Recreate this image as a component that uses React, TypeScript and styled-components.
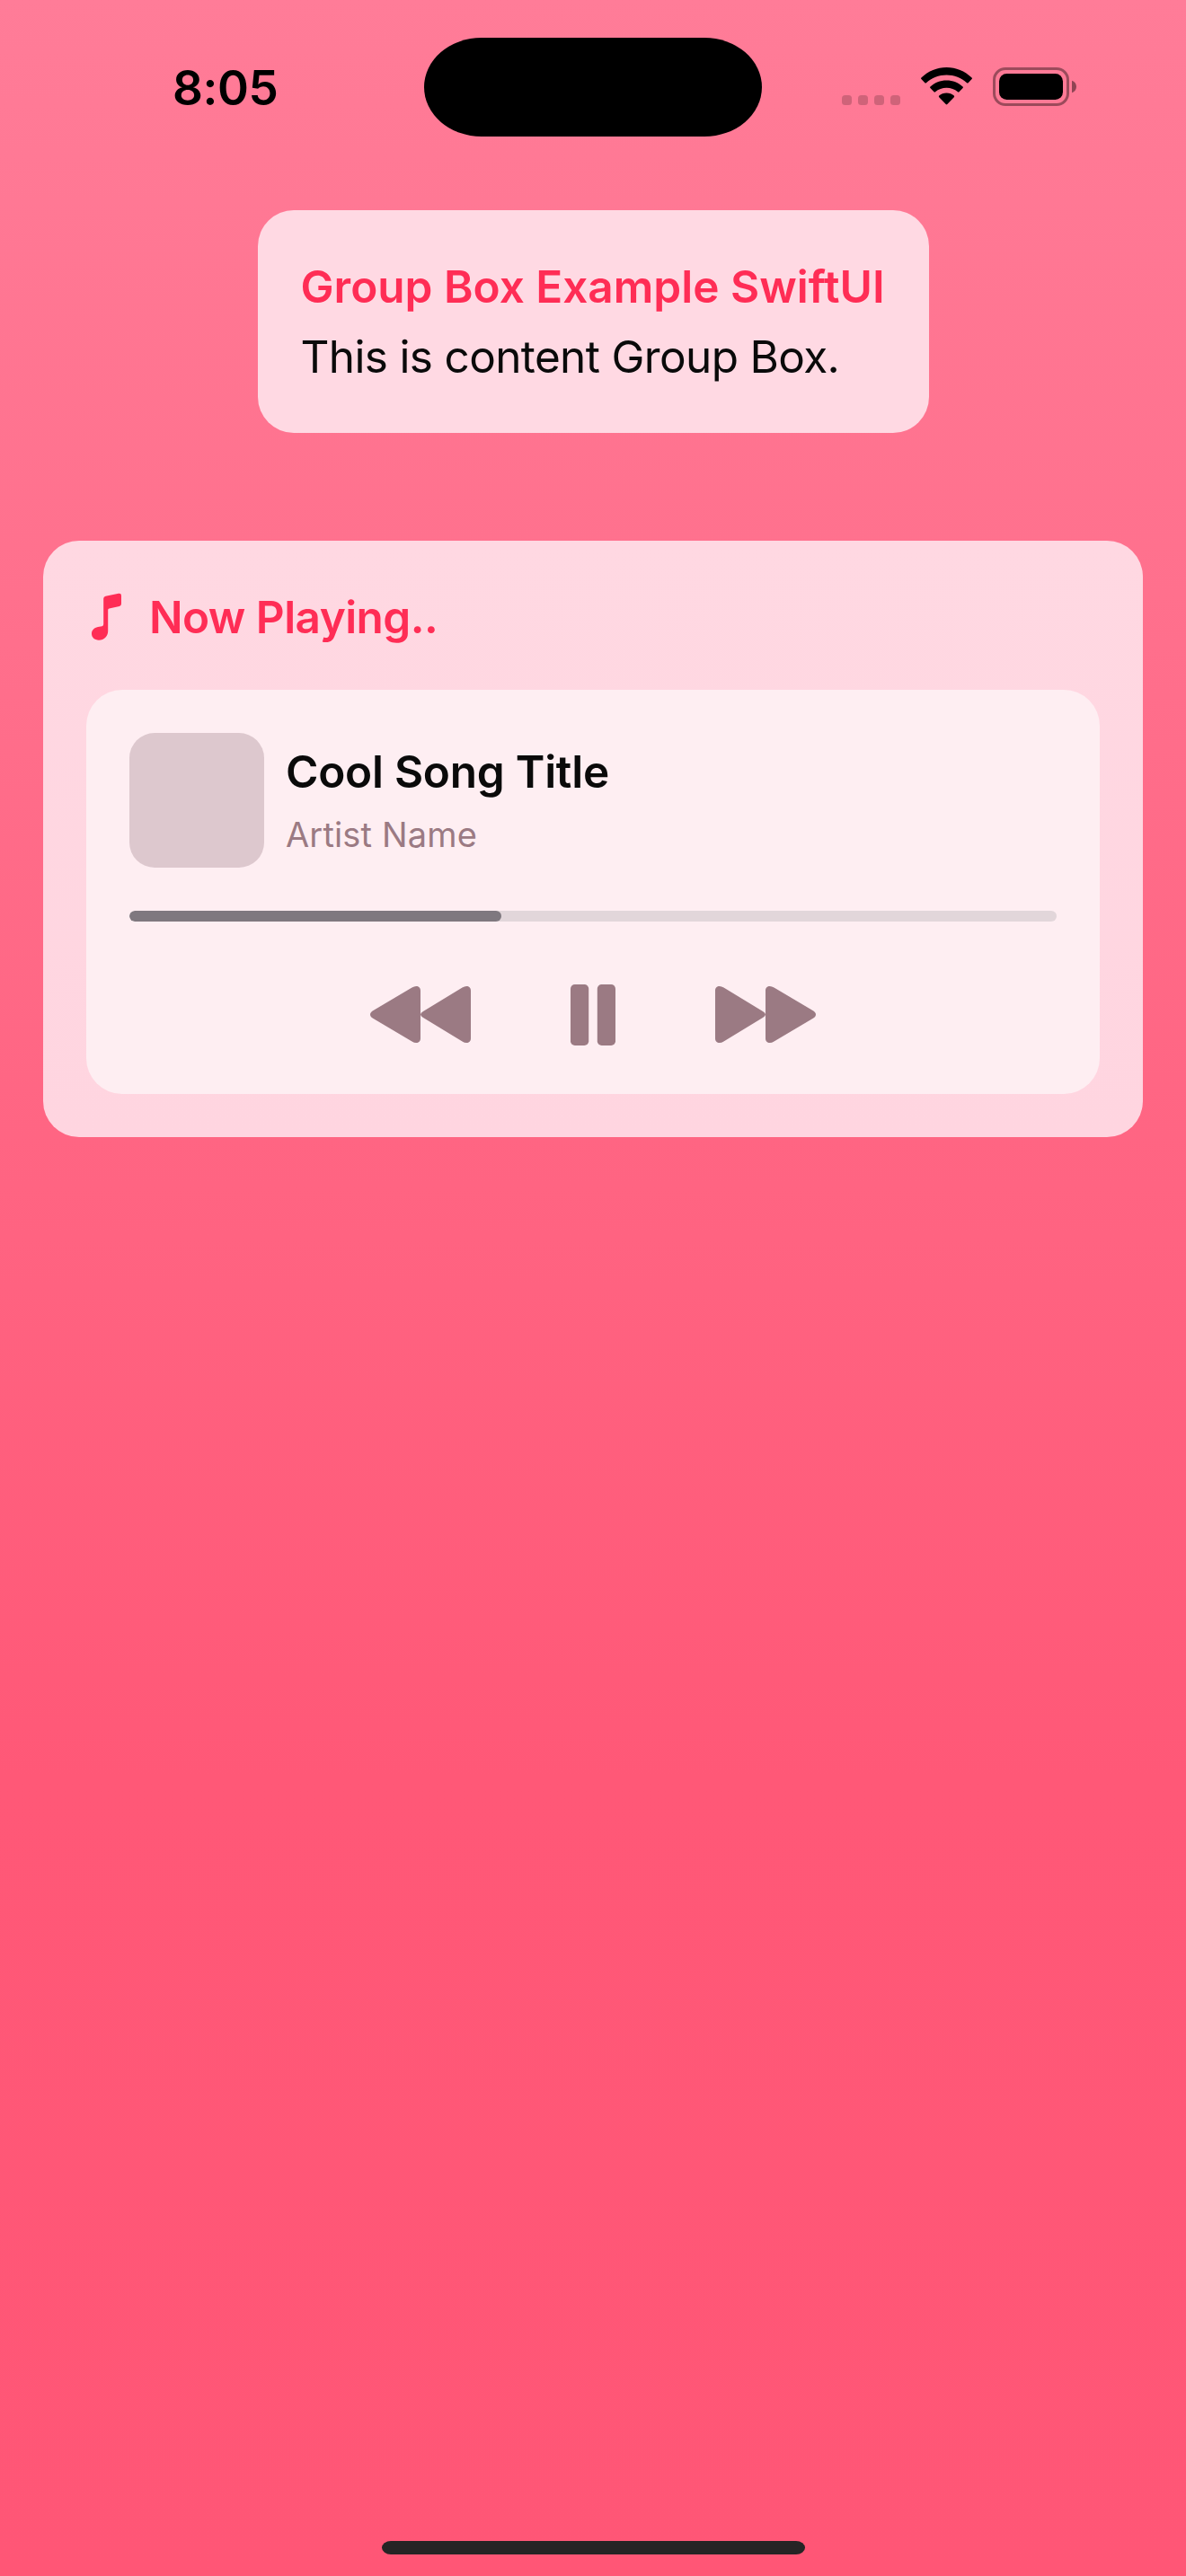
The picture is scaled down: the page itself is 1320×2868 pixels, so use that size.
import React from "react";
import styled, { createGlobalStyle } from "styled-components";

const GlobalStyle = createGlobalStyle`
  * { box-sizing: border-box; }
  html, body { margin: 0; padding: 0; }
  body { font-family: Inter, "Liberation Sans", sans-serif; }
`;

const Screen = styled.main`
  width: 1320px;
  height: 2868px;
  display: flex;
  flex-direction: column;
  align-items: center;
  overflow: hidden;
  background: linear-gradient(180deg, #ff7c98 0%, #ff7a96 4%, #ff5877 69%, #ff5676 100%);
`;

const StatusBar = styled.header`
  width: 100%;
  height: 234px;
  padding: 42px 122px 0 192px;
  display: flex;
  align-items: flex-start;
`;

const Clock = styled.time`
  width: 280px;
  padding-top: 24px;
  font-size: 53px;
  font-weight: 600;
  line-height: 64px;
  letter-spacing: -0.4px;
  color: #000;
`;

const Island = styled.div`
  width: 376px;
  height: 110px;
  border-radius: 64px / 55px;
  background: #000;
`;

const Indicators = styled.div`
  margin-left: auto;
  padding-top: 33px;
  display: flex;
  gap: 23px;
`;

const SignalDots = styled.div`
  display: flex;
  gap: 7px;
  padding-top: 31px;
`;

const Dot = styled.i`
  width: 11px;
  height: 11px;
  border-radius: 3.5px;
  background: rgba(0, 0, 0, 0.19);
`;

const GroupBox = styled.section<{ $width: number; $height: number; $fill: string }>`
  width: ${(p) => p.$width}px;
  height: ${(p) => p.$height}px;
  padding: 48px;
  border-radius: 40px;
  background: ${(p) => p.$fill};
  flex: none;
`;

const Stack = styled.div`
  display: flex;
  flex-direction: column;
  align-items: center;
  gap: 120px;
`;

const Label = styled.h2<{ $spacing?: number }>`
  display: flex;
  align-items: center;
  margin: 0;
  height: 74px;
  font-size: 49.5px;
  font-weight: 600;
  line-height: 74px;
  letter-spacing: ${(p) => p.$spacing ?? 0}px;
  color: #ff2d55;
  white-space: nowrap;
`;

const LabelIcon = styled.svg`
  width: 34px;
  height: 54px;
  margin: 0 30px 0 6px;
`;

const Body = styled.p`
  margin: 0;
  padding-top: 8px;
  font-size: 49.5px;
  line-height: 66px;
  letter-spacing: -0.65px;
  color: #0a0a0a;
  white-space: nowrap;
`;

const PlayerSlot = styled.div`
  padding-top: 44px;
`;

const Track = styled.div`
  display: flex;
  align-items: center;
  gap: 24px;
`;

const Artwork = styled.div`
  width: 150px;
  height: 150px;
  border-radius: 28px;
  background: #ddc8ce;
`;

const TrackText = styled.div`
  display: flex;
  flex-direction: column;
  gap: 6px;
  padding-top: 3px;
`;

const SongTitle = styled.h3`
  margin: 0;
  font-size: 49.5px;
  font-weight: 600;
  line-height: 66px;
  letter-spacing: -0.25px;
  color: #0a0a0a;
`;

const Artist = styled.p`
  margin: 0;
  padding-top: 1px;
  font-size: 38px;
  line-height: 60px;
  letter-spacing: 0.15px;
  color: #9b7a83;
`;

const Progress = styled.div`
  height: 12px;
  margin-top: 48px;
  border-radius: 6px;
  overflow: hidden;
  background: #e2d6da;
`;

const ProgressFill = styled.div`
  height: 100%;
  border-radius: 6px;
  background: #7f787f;
`;

const Controls = styled.div`
  display: flex;
  justify-content: center;
  align-items: center;
  gap: 111px;
  height: 69px;
  margin-top: 69px;
  color: #9b7a83;
`;

const HomeIndicator = styled.div`
  width: 471px;
  height: 15px;
  margin: auto 0 24px 1px;
  border-radius: 10px / 7.5px;
  background: #262425;
`;

const WifiIcon = () => (
  <svg width="57" height="42" viewBox="0 0 57 42" fill="#000">
    <path d="M28.5 0C39 0 48.800 4 56.600 11.600Q57.300 12.400 56.600 13.100L52.600 17.200Q51.800 17.900 51.100 17.200C45 11.500 37 8.500 28.500 8.500S12 11.500 5.900 17.200Q5.200 17.900 4.400 17.200L.4 13.100Q-.3 12.400 .4 11.600C8.200 4 18 0 28.500 0Z" />
    <path d="M28.500 14.500C35.500 14.500 41.700 17 46.600 21.600Q47.400 22.400 46.600 23.100L42.500 27.300Q41.700 28 41 27.300C37.600 24.300 33.200 22.700 28.500 22.700S19.400 24.300 16 27.300Q15.300 28 14.500 27.300L10.400 23.100Q9.600 22.400 10.400 21.600C15.300 17 21.500 14.500 28.500 14.500Z" />
    <path d="M28.500 28.600C31.800 28.600 34.500 29.700 36.800 31.600Q37.600 32.400 36.800 33.200L29.300 41.100Q28.500 41.900 27.700 41.100L20.200 33.200Q19.400 32.400 20.200 31.600C22.500 29.700 25.200 28.600 28.500 28.600Z" />
  </svg>
);

const BatteryIcon = () => (
  <svg width="93" height="43" viewBox="0 0 93 43">
    <rect x="1.500" y="1.500" width="82" height="40" rx="12.500" fill="none" stroke="#000" strokeOpacity=".39" strokeWidth="3" />
    <rect x="7" y="7" width="71" height="29" rx="8.500" fill="#000" />
    <path d="M88 14.700C91 15.700 93 18.300 93 21.500S91 27.300 88 28.300Z" fill="#000" fillOpacity=".44" />
  </svg>
);

const NoteIcon = () => (
  <LabelIcon viewBox="0 0 34 54" fill="#ff2d55">
    <path d="M13.200 6.500Q13.200 4.200 15.500 3.700L30 .8Q33 .3 33 3V12.300Q33 14.500 30.900 15L19.500 17.400Q18.200 17.700 18.200 19V42.500C18.200 48.500 14 52.700 8 52.700C3.300 52.700 0 49.800 0 45.600C0 41.700 2.700 39 7 38.100L11.500 37.200Q13.200 36.800 13.200 35Z" />
  </LabelIcon>
);

const skipPath =
  "M0 5C0 1.500 2 0 4.800 0Q7 0 9.500 1.500L53 28Q56 29.800 56 31.500V5C56 1.500 58 0 60.800 0Q63 0 65.500 1.500L108.500 27Q112 29 112 31.500T108.500 36L65.500 61.500Q63 63 60.800 63C58 63 56 61.500 56 58V31.500Q56 33.200 53 35L9.500 61.500Q7 63 4.800 63C2 63 0 61.500 0 58Z";

const RewindIcon = () => (
  <svg width="112" height="63" viewBox="0 0 112 63" fill="currentColor">
    <path transform="translate(112 0) scale(-1 1)" d={skipPath} />
  </svg>
);

const ForwardIcon = () => (
  <svg width="112" height="63" viewBox="0 0 112 63" fill="currentColor">
    <path d={skipPath} />
  </svg>
);

const PauseIcon = () => (
  <svg width="50" height="68" viewBox="0 0 50 68" fill="currentColor">
    <rect x="0" width="20.200" height="68" rx="4.800" />
    <rect x="29.800" width="20.200" height="68" rx="4.800" />
  </svg>
);

export default function App() {
  const progress = 414 / 1032;
  return (
    <>
      <GlobalStyle />
      <Screen>
        <StatusBar>
          <Clock>8:05</Clock>
          <Island />
          <Indicators>
            <SignalDots>
              <Dot />
              <Dot />
              <Dot />
              <Dot />
            </SignalDots>
            <WifiIcon />
            <BatteryIcon />
          </Indicators>
        </StatusBar>
        <Stack>
          <GroupBox $width={747} $height={248} $fill="#ffd9e3">
            <Label>Group Box Example SwiftUI</Label>
            <Body>This is content Group Box.</Body>
          </GroupBox>
          <GroupBox $width={1224} $height={664} $fill="linear-gradient(#ffd8e2, #ffd5e0)">
            <Label $spacing={-0.55}>
              <NoteIcon />
              Now Playing..
            </Label>
            <PlayerSlot>
              <GroupBox $width={1128} $height={450} $fill="#feeef2">
                <Track>
                  <Artwork />
                  <TrackText>
                    <SongTitle>Cool Song Title</SongTitle>
                    <Artist>Artist Name</Artist>
                  </TrackText>
                </Track>
                <Progress>
                  <ProgressFill style={{ width: `${progress * 100}%` }} />
                </Progress>
                <Controls>
                  <RewindIcon />
                  <PauseIcon />
                  <ForwardIcon />
                </Controls>
              </GroupBox>
            </PlayerSlot>
          </GroupBox>
        </Stack>
        <HomeIndicator />
      </Screen>
    </>
  );
}
